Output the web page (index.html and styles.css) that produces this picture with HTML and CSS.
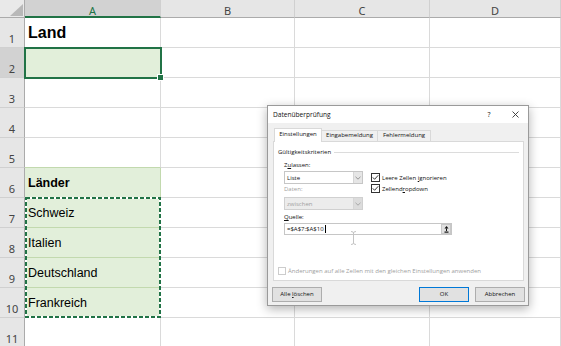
FILE: index.html
```html
<!DOCTYPE html>
<html>
<head>
  <meta charset="UTF-8">
  <title>Datenüberprüfung</title>
  <link rel="stylesheet" href="styles.css">
</head>
<body>
  <div class="sheet">
    <div class="corner"><span class="tri"></span></div>
    <div class="colhead on">A</div>
    <div class="colhead">B</div>
    <div class="colhead">C</div>
    <div class="colhead">D</div>

    <div class="rowhead">1</div>
    <div class="cell title">Land</div>
    <div class="cell"></div>
    <div class="cell"></div>
    <div class="cell"></div>

    <div class="rowhead on">2</div>
    <div class="cell fill active"></div>
    <div class="cell"></div>
    <div class="cell"></div>
    <div class="cell"></div>

    <div class="rowhead">3</div>
    <div class="cell"></div>
    <div class="cell"></div>
    <div class="cell"></div>
    <div class="cell"></div>

    <div class="rowhead">4</div>
    <div class="cell"></div>
    <div class="cell"></div>
    <div class="cell"></div>
    <div class="cell"></div>

    <div class="rowhead">5</div>
    <div class="cell above"></div>
    <div class="cell"></div>
    <div class="cell"></div>
    <div class="cell"></div>

    <div class="rowhead">6</div>
    <div class="cell fill bold">Länder</div>
    <div class="cell"></div>
    <div class="cell"></div>
    <div class="cell"></div>

    <div class="rowhead">7</div>
    <div class="cell fill copy">Schweiz
      <svg class="ants" width="136" height="121" viewBox="0 0 136 121">
        <rect x="1" y="1" width="134" height="119" fill="none" stroke="#ffffff" stroke-width="2"/>
        <rect x="1" y="1" width="134" height="119" fill="none" stroke="#217346" stroke-width="2" stroke-dasharray="4 2"/>
      </svg>
    </div>
    <div class="cell"></div>
    <div class="cell"></div>
    <div class="cell"></div>

    <div class="rowhead">8</div>
    <div class="cell fill">Italien</div>
    <div class="cell"></div>
    <div class="cell"></div>
    <div class="cell"></div>

    <div class="rowhead">9</div>
    <div class="cell fill">Deutschland</div>
    <div class="cell"></div>
    <div class="cell"></div>
    <div class="cell"></div>

    <div class="rowhead">10</div>
    <div class="cell fill">Frankreich</div>
    <div class="cell"></div>
    <div class="cell"></div>
    <div class="cell"></div>

    <div class="rowhead">11</div>
    <div class="cell"></div>
    <div class="cell"></div>
    <div class="cell"></div>
    <div class="cell"></div>
  </div>

  <div class="dlg">
    <div class="dlg-title">
      <span class="dlg-name">Datenüberprüfung</span>
      <span class="tbtn">?</span>
      <span class="tbtn">
        <svg width="7" height="7" viewBox="0 0 7 7"><path d="M0.5 0.5 L6.5 6.5 M6.5 0.5 L0.5 6.5" stroke="#333" stroke-width="0.9"/></svg>
      </span>
    </div>
    <div class="dlg-body">
      <div class="tabs">
        <div class="tab active">Einstellungen</div>
        <div class="tab w2">Eingabemeldung</div>
        <div class="tab w3">Fehlermeldung</div>
      </div>
      <div class="panel">
        <div class="legend">Gültigkeitskriterien</div>
        <div class="crit">
          <div class="left">
            <div class="lbl">Z<u>u</u>lassen:</div>
            <div class="select">
              <span class="sel-text">Liste</span>
              <span class="dd"><svg width="6" height="4" viewBox="0 0 6 4"><path d="M0.5 0.8 L3 3.2 L5.5 0.8" fill="none" stroke="#808080" stroke-width="0.8"/></svg></span>
            </div>
            <div class="lbl off">Daten:</div>
            <div class="select off">
              <span class="sel-text">zwischen</span>
              <span class="dd"><svg width="6" height="4" viewBox="0 0 6 4"><path d="M0.5 0.8 L3 3.2 L5.5 0.8" fill="none" stroke="#9a9a9a" stroke-width="0.8"/></svg></span>
            </div>
          </div>
          <div class="checks">
            <div class="check">
              <svg width="9" height="9" viewBox="0 0 9 9"><rect x="0.5" y="0.5" width="8" height="8" fill="#fff" stroke="#333"/><path d="M1.8 4.4 L3.6 6.3 L7.2 2.3" fill="none" stroke="#222" stroke-width="0.9"/></svg>
              <span>Leere Zellen <u>i</u>gnorieren</span>
            </div>
            <div class="check">
              <svg width="9" height="9" viewBox="0 0 9 9"><rect x="0.5" y="0.5" width="8" height="8" fill="#fff" stroke="#333"/><path d="M1.8 4.4 L3.6 6.3 L7.2 2.3" fill="none" stroke="#222" stroke-width="0.9"/></svg>
              <span>Zellend<u>r</u>opdown</span>
            </div>
          </div>
        </div>
        <div class="lbl src-lbl"><u>Q</u>uelle:</div>
        <div class="source">
          <span class="val">=$A$7:$A$10</span><span class="caret"></span>
          <span class="refbtn">
            <svg width="5" height="7" viewBox="0 0 5 7"><path d="M2.5 0 L4.5 2.5 L0.5 2.5 Z" fill="#111"/><rect x="2" y="2.5" width="1" height="2.5" fill="#111"/><rect x="0.5" y="5.5" width="4" height="1.2" fill="#111"/></svg>
          </span>
        </div>
        <div class="apply">
          <span class="box-off"></span>
          <span>Änderungen auf alle Zellen mit den gleichen Einstellungen anwenden</span>
        </div>
      </div>
      <div class="foot">
        <div class="btn first">Alle <u>l</u>öschen</div>
        <div class="btn ok">OK</div>
        <div class="btn">Abbrechen</div>
      </div>
    </div>
  </div>

  <svg class="ibeam" width="7" height="14" viewBox="0 0 7 14">
    <path d="M1 0.5 Q3.5 0.5 3.5 2 Q3.5 0.5 6 0.5 M3.5 2 V12 M1 13.5 Q3.5 13.5 3.5 12 Q3.5 13.5 6 13.5" fill="none" stroke="#c4c4c4" stroke-width="1"/>
  </svg>
</body>
</html>
```

FILE: styles.css
```css
*{
  box-sizing: border-box;
}

body{
  margin: 0;
  width: 561px;
  height: 346px;
  overflow: hidden;
  position: relative;
  background-color: #ffffff;
  font-family: "Liberation Sans", Arial, sans-serif;
}

/* spreadsheet */

.sheet{
  display: grid;
  grid-template-columns: 25px 136px 134px 135px 131px;
  grid-template-rows: 18px repeat(11, 30px);
}

.corner{
  background-color: #e9e9e9;
  border-right: 1px solid #ababab;
  border-bottom: 1px solid #ababab;
  display: flex;
  justify-content: flex-end;
  align-items: flex-end;
  padding: 0 1px 1px 0;
}

.tri{
  width: 0;
  height: 0;
  border-left: 13px solid transparent;
  border-bottom: 12px solid #b8b8b8;
}

.colhead{
  background-color: #e6e6e6;
  border-right: 1px solid #d0d0d0;
  border-bottom: 1px solid #ababab;
  text-align: center;
  font-family: "Noto Sans", sans-serif;
  font-size: 11px;
  line-height: 15px;
  padding-top: 3px;
  color: #444444;
}

.colhead.on{
  background-color: #d2d2d2;
  color: #217346;
  border-bottom: 2px solid #217346;
}

.rowhead{
  background-color: #e6e6e6;
  border-right: 1px solid #ababab;
  border-bottom: 1px solid #d0d0d0;
  display: flex;
  justify-content: center;
  align-items: flex-end;
  padding-bottom: 2px;
  font-family: "Noto Sans", sans-serif;
  font-size: 11px;
  line-height: 13px;
  color: #444444;
}

.rowhead.on{
  background-color: #d2d2d2;
}

.cell{
  border-right: 1px solid #dadada;
  border-bottom: 1px solid #dadada;
  display: flex;
  align-items: flex-end;
  padding: 0 0 6px 3px;
  font-size: 12.5px;
  line-height: 15px;
  color: #000000;
  white-space: nowrap;
}

.cell.title{
  font-size: 16px;
  font-weight: bold;
  line-height: 18px;
  padding-bottom: 5px;
}

.cell.bold{
  font-weight: bold;
}

.cell.fill{
  background-color: #e2efda;
  border-color: #c2d9ae;
}

.cell.above{
  border-bottom-color: #c2d9ae;
}

.cell.active{
  position: relative;
  z-index: 1;
  outline: 2px solid #217346;
  outline-offset: -1px;
}

.cell.active::after{
  content: "";
  position: absolute;
  right: -4px;
  bottom: -4px;
  width: 5px;
  height: 5px;
  background-color: #217346;
  border: 1px solid #ffffff;
}

.cell.copy{
  position: relative;
}

.ants{
  position: absolute;
  left: 0;
  top: -1px;
  z-index: 2;
}

/* dialog */

.dlg{
  position: absolute;
  left: 267px;
  top: 105px;
  width: 262px;
  height: 201px;
  z-index: 5;
  border: 1px solid #9a9a9a;
  background-color: #f0f0f0;
  box-shadow: 0 3px 10px rgba(0, 0, 0, 0.3);
  font-family: "Open Sans", sans-serif;
  font-size: 6px;
  color: #111111;
  display: flex;
  flex-direction: column;
}

.dlg-title{
  height: 17px;
  background-color: #ffffff;
  display: flex;
  align-items: center;
  padding-left: 5px;
}

.dlg-name{
  font-size: 6.6px;
  flex: 1;
}

.tbtn{
  width: 26px;
  height: 17px;
  display: flex;
  justify-content: center;
  align-items: center;
  font-size: 7px;
}

.dlg-body{
  flex: 1;
  padding: 5px 3px 0 5px;
}

.tabs{
  height: 13px;
  display: flex;
  align-items: flex-end;
}

.tab{
  height: 11px;
  width: 48px;
  border: 1px solid #d9d9d9;
  border-bottom: none;
  background-color: #f0f0f0;
  text-align: center;
  line-height: 9px;
  margin-left: -1px;
}

.tab.active{
  height: 14px;
  margin-left: 1px;
  margin-bottom: -1px;
  padding-top: 1px;
  background-color: #ffffff;
  position: relative;
  z-index: 1;
}

.tab.w2{
  width: 57px;
}

.tab.w3{
  width: 54px;
}

.panel{
  width: 251px;
  height: 140px;
  background-color: #ffffff;
  border: 1px solid #d9d9d9;
  display: flex;
  flex-direction: column;
  line-height: 10px;
}

.legend{
  margin: 5px 4px 0 4px;
  display: flex;
  align-items: center;
}

.legend::after{
  content: "";
  flex: 1;
  height: 1px;
  margin-left: 3px;
  background-color: #dcdcdc;
}

.crit{
  margin-top: 3px;
  padding-left: 10px;
  display: flex;
}

.left{
  width: 79px;
}

.lbl.off{
  color: #a0a0a0;
  margin-top: 0;
}

.select{
  height: 13px;
  margin-top: 1px;
  border: 1px solid #c6c6c6;
  background-color: #ffffff;
  display: flex;
  align-items: center;
}

.select.off{
  margin-top: 3px;
  background-color: #ececec;
  border-color: #d0d0d0;
  color: #a0a0a0;
}

.sel-text{
  flex: 1;
  padding-left: 2px;
}

.dd{
  width: 9px;
  height: 100%;
  display: flex;
  justify-content: center;
  align-items: center;
  background-color: #e6e6e6;
  border-left: 1px solid #d6d6d6;
}

.select.off .dd{
  background-color: #dcdcdc;
}

.checks{
  margin: 13px 0 0 8px;
}

.check{
  height: 9px;
  margin-bottom: 2px;
  display: flex;
  align-items: center;
  gap: 2px;
}

.check svg{
  display: block;
}

.src-lbl{
  margin: 2px 0 0 10px;
}

.source{
  width: 168px;
  height: 12px;
  margin: 1px 0 0 10px;
  border: 1px solid #c6c6c6;
  display: flex;
  align-items: center;
  padding-left: 2px;
}

.caret{
  width: 1px;
  height: 8px;
  margin-left: 1px;
  background-color: #000000;
}

.refbtn{
  margin-left: auto;
  margin-right: 0;
  width: 10px;
  height: 10px;
  background-color: #e1e1e1;
  border: 1px solid #c8c8c8;
  display: flex;
  justify-content: center;
  align-items: center;
}

.apply{
  margin: auto 0 5px 4px;
  height: 9px;
  display: flex;
  align-items: center;
  gap: 2px;
  color: #a0a0a0;
}

.box-off{
  width: 8px;
  height: 8px;
  border: 1px solid #cccccc;
  background-color: #ffffff;
}

.foot{
  margin-top: 6px;
  display: flex;
}

.btn{
  width: 50px;
  height: 15px;
  background-color: #e1e1e1;
  border: 1px solid #adadad;
  text-align: center;
  line-height: 13px;
}

.btn.first{
  margin-left: -1px;
}

.btn.ok{
  margin-left: auto;
  margin-right: 6px;
  border-color: #0078d7;
}

.ibeam{
  position: absolute;
  left: 350px;
  top: 231px;
  z-index: 6;
}
```
